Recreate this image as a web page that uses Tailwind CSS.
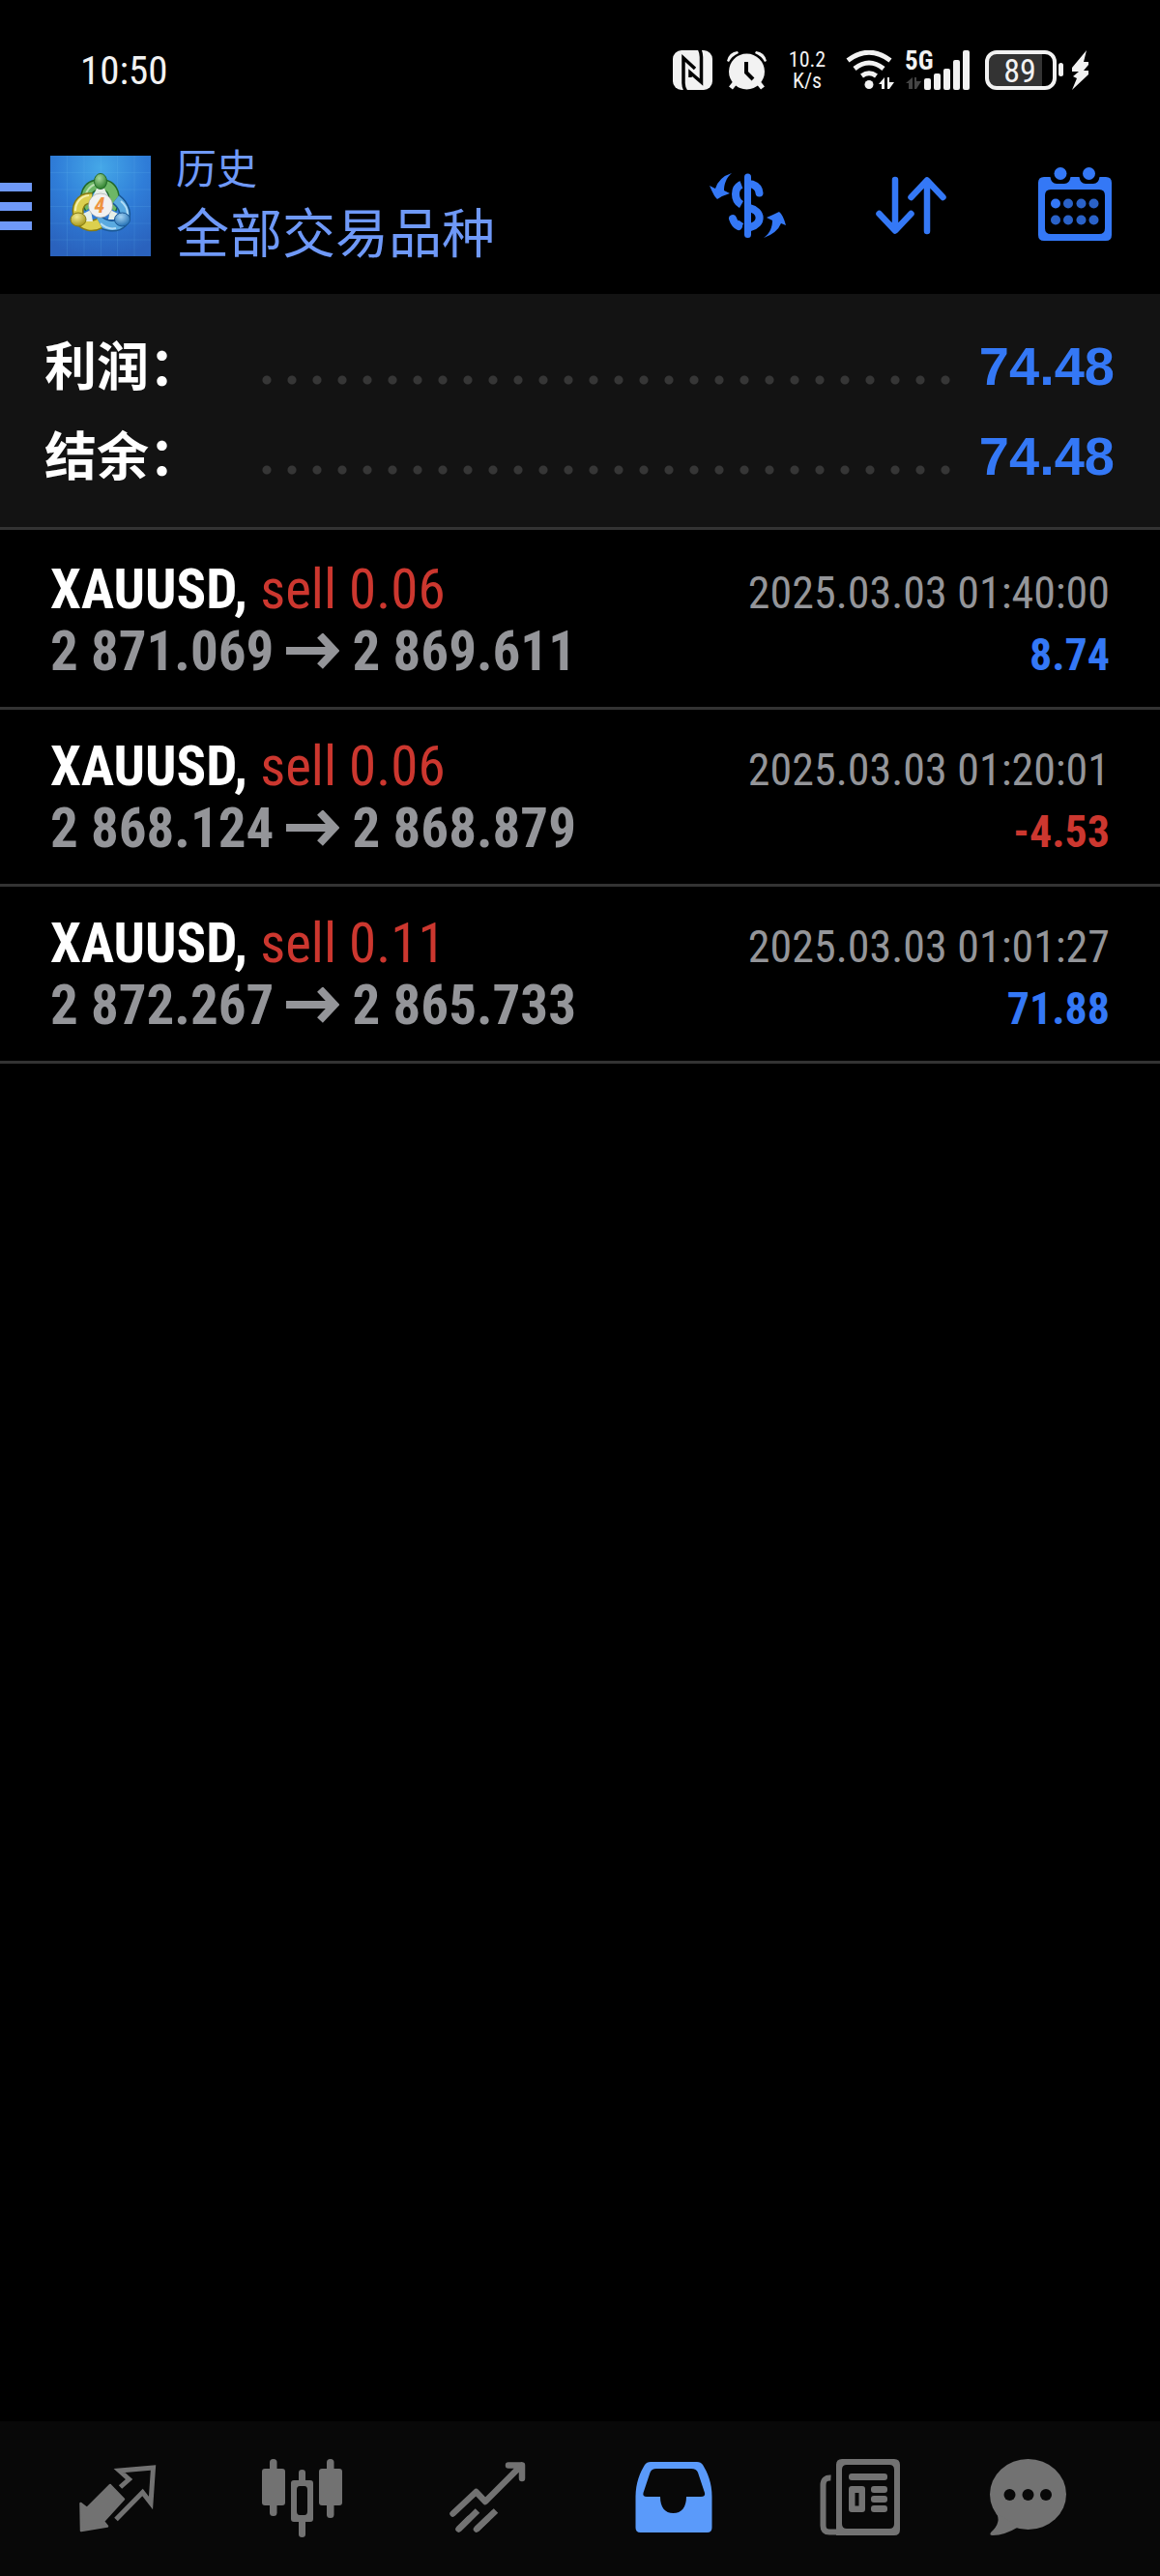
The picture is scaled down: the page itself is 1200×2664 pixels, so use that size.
<!DOCTYPE html>
<html lang="zh-CN">
  <head>
    <meta charset="UTF-8">
    <meta name="viewport" content="width=device-width, initial-scale=1.0">
    <title>历史</title>
    <script src="https://cdn.jsdelivr.net/npm/@tailwindcss/browser@4"></script>
  </head>
  <body class="bg-black text-white min-h-screen flex flex-col font-['Roboto_Condensed','Liberation_Sans_Narrow','Roboto','Noto_Sans_CJK_SC',sans-serif]">

    <!-- Status bar -->
    <div class="h-[122px] pt-6 pl-[83px] pr-[73px] flex items-center justify-between text-[#f2f2f2]">
      <span class="text-[41px] leading-none">10:50</span>
      <div class="flex items-center">
        <!-- NFC -->
        <svg class="w-[42px] h-[42px]" viewBox="0 0 42 42" fill="currentColor">
          <rect x="0" y="0" width="41" height="41" rx="9"/>
          <path d="M14 43Q11 39 11 34V8L23 19M27 -2Q29.500 2 29.500 7V33L18 23V28" fill="none" stroke="#000" stroke-width="3.500"/>
        </svg>
        <!-- Alarm -->
        <svg class="w-[42px] h-[42px] ml-[14px]" viewBox="0 0 42 42" fill="currentColor">
          <circle cx="20.500" cy="22" r="18.500"/>
          <path d="M0 11Q2 2 11 1L12 3Q5 6 2 12ZM41 11Q39 2 30 1L29 3Q36 6 39 12Z"/>
          <path d="M8 34L4 39M33 34L37 39" fill="none" stroke="currentColor" stroke-width="5"/>
          <path d="M20 12V23L27 30" fill="none" stroke="#000" stroke-width="4"/>
        </svg>
        <div class="ml-[18px] w-[46px] flex flex-col items-center text-[22px] leading-[22px]">
          <span>10.2</span>
          <span>K/s</span>
        </div>
        <!-- Wi-Fi -->
        <svg class="w-[52px] h-[42px] ml-4" viewBox="0 0 52 42" fill="currentColor">
          <path d="M3 10.500Q25 -6 47 10.500M10 19Q25 7 40 19M17.500 26.500Q25 21 32.500 26.500" fill="none" stroke="currentColor" stroke-width="5"/>
          <circle cx="25" cy="35.500" r="4.500"/>
          <path d="M35 35L41 28V40H38V35ZM44 28H46V33H51L46 40H44Z"/>
        </svg>
        <!-- Mobile signal -->
        <svg class="w-[68px] h-[42px] ml-[10px] overflow-visible" viewBox="0 0 68 42" fill="currentColor">
          <text x="0" y="20" font-size="27" font-weight="700">5G</text>
          <path d="M1 34L8 28V40H4V34ZM10 28H12V32H17L12 40H10Z" fill="#444"/>
          <rect x="20" y="29" width="7" height="12" rx="2"/>
          <rect x="30" y="24" width="7" height="17" rx="2"/>
          <rect x="40" y="19" width="7" height="22" rx="2"/>
          <rect x="50" y="10" width="7" height="31" rx="2"/>
          <rect x="60" y="0" width="7" height="41" rx="2"/>
        </svg>
        <!-- Battery -->
        <svg class="w-[108px] h-[42px] ml-[15px]" viewBox="0 0 108 42" fill="currentColor">
          <rect x="4" y="3" width="55" height="35" fill="#333"/>
          <rect x="2" y="2" width="70" height="37" rx="10" fill="none" stroke="currentColor" stroke-width="4"/>
          <rect x="76" y="13" width="5" height="14" rx="2.500"/>
          <text x="36" y="33" font-size="34" text-anchor="middle">89</text>
          <path d="M105 0L90 18V22H97L91 27L95 29L90 41L107 25V21H102L107 15V12H102Z"/>
        </svg>
      </div>
    </div>

    <!-- Header -->
    <header class="h-[182px] pr-[40px] flex items-center text-[#6f99f8]">
      <button aria-label="菜单" class="w-[33px] flex flex-col gap-[11px]">
        <span class="h-[9px] bg-[#6f99f8]"></span>
        <span class="h-[9px] bg-[#6f99f8]"></span>
        <span class="h-[9px] bg-[#6f99f8]"></span>
      </button>
      <svg class="w-[104px] h-[104px] ml-[19px]" viewBox="0 0 104 104">
        <defs>
          <radialGradient id="bg" cx="50%" cy="12%" r="90%">
            <stop offset="0" stop-color="#45a8e8"/>
            <stop offset="0.5" stop-color="#2f7dd8"/>
            <stop offset="1" stop-color="#2a62bd"/>
          </radialGradient>
          <radialGradient id="green" cx="40%" cy="30%" r="70%"><stop offset="0" stop-color="#a5d79a"/><stop offset="1" stop-color="#2c7f2c"/></radialGradient>
          <radialGradient id="yellow" cx="40%" cy="30%" r="70%"><stop offset="0" stop-color="#f1ea90"/><stop offset="1" stop-color="#a8981c"/></radialGradient>
          <radialGradient id="blue" cx="40%" cy="30%" r="70%"><stop offset="0" stop-color="#a4d4f4"/><stop offset="1" stop-color="#2370b4"/></radialGradient>
        </defs>
        <rect width="104" height="104" fill="url(#bg)"/>
        <path d="M17.500 0V104M35 0V104M52.500 0V104M69.500 0V104M87 0V104M0 17.500H104M0 35H104M0 52.500H104M0 70H104M0 87H104" stroke="#6cc0f0" stroke-opacity="0.150" fill="none"/>
        <!-- three linked rings -->
        <g fill="none">
          <path d="M41 54C33 42 38 30 52 30C66 30 69 44 63 55" stroke="#22692a" stroke-width="12"/>
          <path d="M41 54C33 42 38 30 52 30C66 30 69 44 63 55" stroke="#6db766" stroke-width="9"/>
          <path d="M36 50C34 40 40 31 48 29" stroke="#b9dfb0" stroke-width="2"/>
          <path d="M48 65C54 73 68 75 74 69C80 62 77 52 68 45" stroke="#1a5794" stroke-width="12"/>
          <path d="M48 65C54 73 68 75 74 69C80 62 77 52 68 45" stroke="#5aaae0" stroke-width="9"/>
          <path d="M80 61C80 54 77 50 73 47M52 70C57 75 63 76 68 75" stroke="#b2dcf5" stroke-width="2"/>
          <path d="M43 44C31 43 26 54 30 64C34 73 44 74 51 70" stroke="#857a14" stroke-width="12"/>
          <path d="M43 44C31 43 26 54 30 64C34 73 44 74 51 70" stroke="#dcd04e" stroke-width="9"/>
          <path d="M40 41C31 42 26 49 26 57" stroke="#f5efaa" stroke-width="2"/>
        </g>
        <path d="M48 34H56L60 42H44ZM34 60L42 56L44 68H35ZM70 60L62 56L60 66H69Z" fill="#e6efe8"/>
        <ellipse cx="52" cy="26.500" rx="6.500" ry="8" fill="url(#green)" stroke="#22692a"/>
        <ellipse cx="29" cy="66" rx="8" ry="7" fill="url(#yellow)" stroke="#857a14"/>
        <ellipse cx="74.500" cy="66" rx="8" ry="7" fill="url(#blue)" stroke="#1a5794"/>
        <circle cx="52" cy="51.500" r="12.500" fill="#f1f1f1" stroke="#888" stroke-width="0.500"/>
        <text x="51" y="59" font-size="22" font-weight="700" font-style="italic" text-anchor="middle" fill="#ee9440">4</text>
      </svg>
      <div class="ml-[26px] mb-2 flex-1 font-['Noto_Sans_CJK_SC',sans-serif]">
        <p class="text-[42px] leading-[56px]">历史</p>
        <h1 class="text-[55px] leading-[74px]">全部交易品种</h1>
      </div>
      <div class="flex gap-[73px] text-[#3478f6]">
        <button aria-label="交易品种">
          <svg class="w-[96px] h-[96px]" viewBox="0 0 96 96" fill="none" stroke="currentColor" stroke-width="8">
            <path d="M47.500 18V77.500" stroke-width="7" stroke-linecap="round"/>
            <path d="M41 26C33 29 33 42 41 46.500"/>
            <path d="M52 25.500Q59 28 59.500 34.500" stroke-linecap="round"/>
            <path d="M49 50C63 53 63 67 50 70"/>
            <path d="M32 61Q34 67 38 69" stroke-linecap="round"/>
            <path d="M36 66L41 69.500"/>
            <path d="M31 14C25 19 23 26 23 32L29 35Q22 37 16 41Q13 39 8 27L14 30Q18 18 31 14ZM64 81C71 76 73 69 73 63L67 60Q74 57 80 54Q84 57 87 68L82 66Q78 76 64 81Z" fill="currentColor" stroke="none"/>
          </svg>
        </button>
        <button aria-label="排序">
          <svg class="w-[96px] h-[96px]" viewBox="0 0 96 96" fill="none" stroke="currentColor" stroke-width="6.500" stroke-linecap="round" stroke-linejoin="round">
            <path d="M31 21V73M14.500 56L31 73.500L47.500 56M64 74V22M47.500 39L64 21.500L80.500 39"/>
          </svg>
        </button>
        <button aria-label="日期">
          <svg class="w-[96px] h-[96px]" viewBox="0 0 96 96" fill="currentColor">
            <path fill-rule="evenodd" d="M16 18H22.500Q23.500 25 29 25H37Q42.500 25 43.500 18H52.500Q53.500 25 59 25H67Q72.500 25 73.500 18H80Q86 18 86 24V78Q86 84 80 84H16Q10 84 10 78V24Q10 18 16 18ZM23 31Q17 31 17 37V71Q17 77 23 77H73Q79 77 79 71V37Q79 31 73 31Z"/>
            <circle cx="33" cy="14.500" r="6.500"/><circle cx="62.500" cy="14.500" r="6.500"/>
            <circle cx="28" cy="45.500" r="5"/>
            <g fill="#2a62c8">
              <circle cx="41" cy="45.500" r="5"/><circle cx="54.500" cy="45.500" r="5"/><circle cx="67.500" cy="45.500" r="5"/>
              <circle cx="28" cy="62.500" r="5"/><circle cx="41" cy="62.500" r="5"/><circle cx="54.500" cy="62.500" r="5"/><circle cx="67.500" cy="62.500" r="5"/>
            </g>
          </svg>
        </button>
      </div>
    </header>

    <!-- Summary -->
    <dl class="bg-[#131313] border-b-3 border-[#333] pt-7 pb-[27px] pl-[46px] pr-[47px] font-['Liberation_Sans','Noto_Sans_CJK_SC',sans-serif] font-bold">
      <div class="h-[93px] flex items-center">
        <dt class="w-[217px] pb-1.5 text-[54px] leading-[80px] font-['Noto_Sans_CJK_SC',sans-serif]">利润：</dt>
        <dd class="flex-1 flex items-center justify-between">
          <span class="w-[728px] h-[10px] mt-7 bg-[radial-gradient(circle,#363636_4px,transparent_5px)] bg-[length:26px_10px]"></span>
          <span class="text-[56px] leading-[80px] text-[#3478f6]">74.48</span>
        </dd>
      </div>
      <div class="h-[93px] flex items-center">
        <dt class="w-[217px] pb-1.5 text-[54px] leading-[80px] font-['Noto_Sans_CJK_SC',sans-serif]">结余：</dt>
        <dd class="flex-1 flex items-center justify-between">
          <span class="w-[728px] h-[10px] mt-7 bg-[radial-gradient(circle,#363636_4px,transparent_5px)] bg-[length:26px_10px]"></span>
          <span class="text-[56px] leading-[80px] text-[#3478f6]">74.48</span>
        </dd>
      </div>
    </dl>

    <!-- Closed deals -->
    <ul class="flex-1 pt-[3px] text-[57px] leading-[64px]">
      <li class="border-b-3 border-[#333] pt-[27px] pb-[25px] px-[52px]">
        <div class="flex items-baseline justify-between">
          <p><b>XAUUSD,</b> <span class="text-[#cc372f]">sell 0.06</span></p>
          <time class="text-[46px] leading-[48px] text-[#949599]">2025.03.03 01:40:00</time>
        </div>
        <div class="flex items-baseline justify-between font-bold">
          <p class="text-[#949599]">2 871.069 <svg class="inline align-baseline w-[55px] h-[38px]" viewBox="0 0 55 38" fill="none" stroke="currentColor" stroke-width="8"><path d="M0 18H49M35 2L50 18L35 34"/></svg> 2 869.611</p>
          <span class="text-[46px] leading-[48px] text-[#3478f6]">8.74</span>
        </div>
      </li>
      <li class="border-b-3 border-[#333] pt-[27px] pb-[25px] px-[52px]">
        <div class="flex items-baseline justify-between">
          <p><b>XAUUSD,</b> <span class="text-[#cc372f]">sell 0.06</span></p>
          <time class="text-[46px] leading-[48px] text-[#949599]">2025.03.03 01:20:01</time>
        </div>
        <div class="flex items-baseline justify-between font-bold">
          <p class="text-[#949599]">2 868.124 <svg class="inline align-baseline w-[55px] h-[38px]" viewBox="0 0 55 38" fill="none" stroke="currentColor" stroke-width="8"><path d="M0 18H49M35 2L50 18L35 34"/></svg> 2 868.879</p>
          <span class="text-[46px] leading-[48px] text-[#cc372f]">-4.53</span>
        </div>
      </li>
      <li class="border-b-3 border-[#333] pt-[27px] pb-[25px] px-[52px]">
        <div class="flex items-baseline justify-between">
          <p><b>XAUUSD,</b> <span class="text-[#cc372f]">sell 0.11</span></p>
          <time class="text-[46px] leading-[48px] text-[#949599]">2025.03.03 01:01:27</time>
        </div>
        <div class="flex items-baseline justify-between font-bold">
          <p class="text-[#949599]">2 872.267 <svg class="inline align-baseline w-[55px] h-[38px]" viewBox="0 0 55 38" fill="none" stroke="currentColor" stroke-width="8"><path d="M0 18H49M35 2L50 18L35 34"/></svg> 2 865.733</p>
          <span class="text-[46px] leading-[48px] text-[#3478f6]">71.88</span>
        </div>
      </li>
    </ul>

    <!-- Bottom tabs -->
    <nav class="h-[160px] bg-[#080808] pl-[26px] pr-[58px] flex items-center text-[#727272]">
      <button aria-label="行情" class="flex-1 flex justify-center">
        <svg class="w-[96px] h-[96px]" viewBox="0 0 96 96" fill="currentColor">
          <path d="M40 34L54 48.500L33 71.500L37 76.500L10 81L9.500 53L16 58Z" stroke="currentColor" stroke-width="2.500" stroke-linejoin="round"/>
          <path d="M46 69.500L73.500 41.500L82 52.500L84.500 16L49.500 19L59.500 28L50.500 36" fill="none" stroke="currentColor" stroke-width="5"/>
        </svg>
      </button>
      <button aria-label="图表" class="flex-1 flex justify-center">
        <svg class="w-[96px] h-[96px]" viewBox="0 0 96 96" fill="currentColor">
          <rect x="5" y="17" width="24" height="38" rx="3"/><rect x="13" y="7" width="7.500" height="59" rx="3.500"/>
          <path fill-rule="evenodd" d="M38 29H55Q58 29 58 32V69Q58 72 55 72H38Q35 72 35 69V32Q35 29 38 29ZM44 35Q41 35 41 39V61Q41 65 44 65H49Q52 65 52 61V39Q52 35 49 35Z"/>
          <path d="M43 31V21Q43 18 46.500 18Q50 18 50 21V31ZM43 70V85Q43 88 46.500 88Q50 88 50 85V70Z"/>
          <rect x="64" y="17" width="24" height="38" rx="3"/><rect x="72" y="7" width="7.500" height="61" rx="3.500"/>
        </svg>
      </button>
      <button aria-label="交易" class="flex-1 flex justify-center">
        <svg class="w-[96px] h-[96px]" viewBox="0 0 96 96" fill="none" stroke="currentColor" stroke-width="6.500">
          <path d="M10.500 63.500L34.500 41L44 51L81.500 13.500M68 13.500H82V27" stroke-linecap="round" stroke-linejoin="round"/>
          <path d="M16.500 79.500L27 69M35 79.500L46 69" stroke-linecap="round"/>
          <path d="M16.500 79.500L36 60.500M35 79.500L55 60.500"/>
        </svg>
      </button>
      <button aria-label="历史" class="flex-1 flex justify-center text-[#5a9afa]">
        <svg class="w-[96px] h-[96px]" viewBox="0 0 96 96" fill="currentColor">
          <path fill-rule="evenodd" d="M7.500 78V46C7.500 32 12 21 17 13Q19 10 23 10H71Q75 10 77 13C82 21 86.500 32 86.500 46V78Q86.500 83 81.500 83H12.500Q7.500 83 7.500 78ZM29 17Q24 17 22.500 21L15.500 42Q14.500 46 19 46H33C33 57 38 63 46.500 63S60 57 60 46H75Q80 46 79 42L72 21Q70.500 17 65 17Z"/>
        </svg>
      </button>
      <button aria-label="新闻" class="flex-1 flex justify-center">
        <svg class="w-[96px] h-[96px]" viewBox="0 0 96 96" fill="currentColor">
          <path fill-rule="evenodd" d="M29 7H83Q89 7 89 13V80Q89 86 83 86H23V13Q23 7 29 7ZM34 13Q29 13 29 18V74Q29 79 34 79H78Q83 79 83 74V18Q83 13 78 13Z"/>
          <path d="M17.500 26.500Q9.500 26 9.500 34V76Q9.500 82.500 16 82.500H26" fill="none" stroke="currentColor" stroke-width="6"/>
          <rect x="36" y="22" width="40" height="7" rx="3"/>
          <path fill-rule="evenodd" d="M39 35H50Q53 35 53 38V59Q53 62 50 62H39Q36 62 36 59V38Q36 35 39 35ZM42.500 42V55.500H46.500V42Z"/>
          <rect x="59" y="35" width="17" height="7" rx="3"/><rect x="59" y="45" width="17" height="7" rx="3"/><rect x="59" y="55" width="17" height="7" rx="3"/>
        </svg>
      </button>
      <button aria-label="消息" class="w-[156px] flex justify-center">
        <svg class="w-[96px] h-[96px]" viewBox="0 0 96 96" fill="currentColor">
          <ellipse cx="47.500" cy="43.500" rx="39.500" ry="36.500"/>
          <path d="M14 62Q21 72 9 83Q7 86 11 86Q23 86 38 77Z"/>
          <g fill="#080808"><circle cx="28.500" cy="44" r="6"/><circle cx="47.500" cy="44" r="6"/><circle cx="66" cy="44" r="6"/></g>
        </svg>
      </button>
    </nav>
  </body>
</html>
